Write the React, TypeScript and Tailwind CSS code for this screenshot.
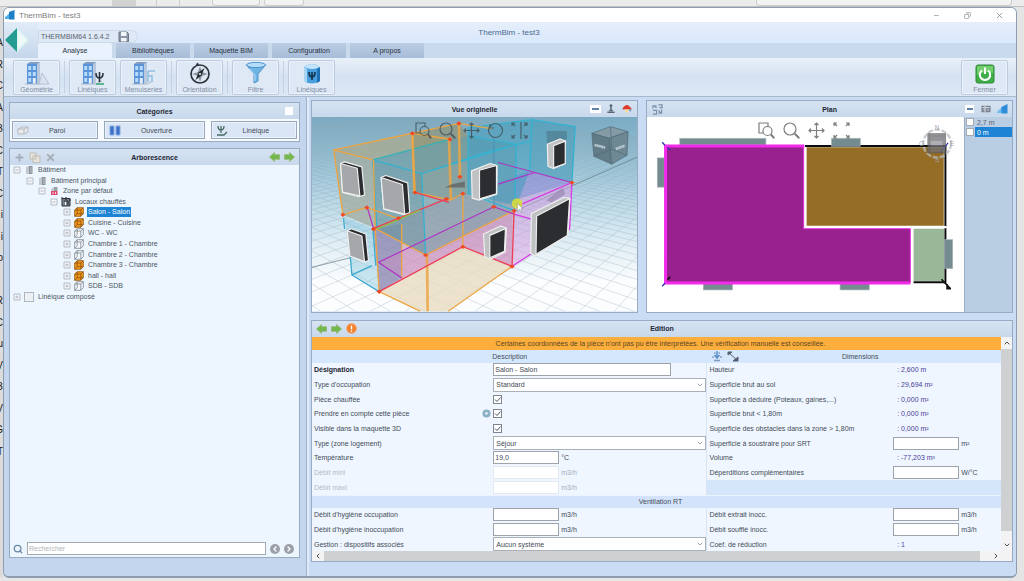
import React, { useState } from "react";
import { ChevronDown, ChevronLeft, ChevronRight, ChevronUp, Copy, Minus, Plus, Search, X } from "lucide-react";

type P = { children?: React.ReactNode; className?: string };

const EDGE_LETTERS = ["A", "R", "C", "A", "B", "C", "T", "C", "i", "i", "o", "", "R", "C", "u", "V", "B", "V", "G", "T"];

/* ---------- Ribbon icons ---------- */

function Building({ children }: P) {
  return (
    <svg viewBox="0 0 28 26" className="h-[26px] w-7" aria-hidden="true">
      <path d="M4 3 L7 1 L17 1 L17 21 L14 23 L4 23 Z" fill="#7f9cc4" />
      <path d="M4 3 H14 V23 H4 Z" fill="#5b92d8" />
      <path d="M14 3 L17 1 V21 L14 23 Z" fill="#b9c8dc" />
      <path d="M5.200 5 H8.200 V9 H5.200 Z M9.800 5 H12.800 V9 H9.800 Z M5.200 11 H8.200 V15 H5.200 Z M9.800 11 H12.800 V15 H9.800 Z M5.200 17 H8.200 V21 H5.200 Z" fill="#b5dbff" />
      <path d="M9.800 17 H12.800 V23 H9.800 Z" fill="#e3edf8" />
      <path d="M2 23 L17 23 L23 20" stroke="#a9b6c6" fill="none" />
      {children}
    </svg>
  );
}

const GeometryIcon = () => (
  <Building>
    <path d="M16 23 L19 12 L26 23 Z" fill="#d8e2ee" stroke="#b4c2d4" />
  </Building>
);
const LinearIcon = () => (
  <Building>
    <path d="M17 12 Q17 17 20.500 17 Q24 17 24 12 M20.500 11 V21" stroke="#26323d" strokeWidth="1.600" fill="none" />
    <path d="M17 23 H25" stroke="#2fa66d" strokeWidth="1.500" />
  </Building>
);
const JoineryIcon = () => (
  <Building>
    <path d="M18 10 H25 M18 10 V21 M18 15 H22 V21" stroke="#8fbde2" strokeWidth="1.500" fill="none" />
  </Building>
);
const CompassIcon = () => (
  <svg viewBox="0 0 28 26" className="h-[26px] w-7" aria-hidden="true">
    <circle cx="14" cy="13" r="9" fill="none" stroke="#2e343c" strokeWidth="1.700" />
    <path d="M14 5 L16 11 L22 13 L16 15 L14 21 L12 15 L6 13 L12 11 Z" fill="#8d959f" />
    <path d="M18.500 7 L15.500 14.500 L9.500 19 L12.500 11.500 Z" fill="#252b33" />
    <circle cx="14" cy="13" r="1" fill="#fff" />
    <path d="M12 1.500 L9.500 3.500 L13 4.500 Z" fill="#2e343c" />
  </svg>
);
const FunnelIcon = () => (
  <svg viewBox="0 0 28 26" className="h-[26px] w-7" aria-hidden="true">
    <path d="M4.500 4 L12 13 V22 L16 20 V13 L23.500 4 Z" fill="#6db3e4" stroke="#4d94cc" />
    <ellipse cx="14" cy="4" rx="9.500" ry="2.600" fill="#b5defa" stroke="#4d94cc" />
    <path d="M8 8 L13 14 V20" stroke="#b5defa" fill="none" />
  </svg>
);
const LinearBoxIcon = () => (
  <svg viewBox="0 0 28 26" className="h-[26px] w-7" aria-hidden="true">
    <path d="M6 6 Q14 0 22 6 V20 Q14 25 6 20 Z" fill="#4a9fdc" />
    <path d="M6 6 L9 8 V22 L6 20 Z" fill="#a9d5f5" />
    <path d="M22 6 L19 8 V22 L22 20 Z" fill="#1f6fb5" />
    <path d="M6 6 Q14 0 22 6 Q14 10 6 6 Z" fill="#c3e4fb" />
    <path d="M11 11 Q11 16 14 16 Q17 16 17 11 M14 11 V19" stroke="#12344f" strokeWidth="1.700" fill="none" />
  </svg>
);
const PowerIcon = () => (
  <svg viewBox="0 0 28 26" className="h-[26px] w-7" aria-hidden="true">
    <rect x="5" y="4" width="18" height="18" rx="2" fill="#3fae49" stroke="#2c8a37" />
    <path d="M6 5 H22 V12 Q14 9 6 14 Z" fill="#75cf70" />
    <path d="M11 9.500 A5.200 5.200 0 1 0 17 9.500" fill="none" stroke="#fff" strokeWidth="2" />
    <path d="M14 6.500 V13" stroke="#fff" strokeWidth="2" />
  </svg>
);

function Arrow({ left, size = "h-[11px] w-3" }: { left?: boolean; size?: string }) {
  return (
    <svg viewBox="0 0 12 11" className={size} aria-hidden="true">
      <path
        d={left ? "M0.500 5.500 L6 0.500 V3 H11.500 V8 H6 V10.500 Z" : "M11.500 5.500 L6 0.500 V3 H0.500 V8 H6 V10.500 Z"}
        fill="#72b94b"
        stroke="#96b878"
      />
    </svg>
  );
}

/* ---------- Frame pieces ---------- */

function RibbonButton({ label, children }: { label: string; children: React.ReactNode }) {
  return (
    <button className="flex h-[35px] w-[47px] flex-col items-center rounded-xs border border-[#bccbdd] bg-[#dfe9f5] text-[#8290a6] shadow-[inset_0_0_0_1px_#eaf2fb]">
      <span className="flex h-[25px] items-start">{children}</span>
      <span className="leading-[7px]">{label}</span>
    </button>
  );
}

const RibbonSep = () => <span className="mx-1 h-8 w-px bg-[#c3d1e2]" />;

function PanelHeader({ title, left, right }: { title: string; left?: React.ReactNode; right?: React.ReactNode }) {
  return (
    <header className="grid h-4 shrink-0 grid-cols-[1fr_auto_1fr] items-center bg-linear-to-b from-[#d6e3f2] to-[#c8d9ec] px-1">
      <div className="flex items-center gap-1">{left}</div>
      <h2 className="font-bold text-[#1e2733]">{title}</h2>
      <div className="flex items-center justify-end gap-1">{right}</div>
    </header>
  );
}

function Panel({ children, className = "" }: P) {
  return <section className={"flex flex-col border border-[#98abc3] " + className}>{children}</section>;
}

/* ---------- Tree ---------- */

type Kind = "building" | "zone" | "rooms" | "solid" | "wire" | "box";
const TREE: { pad: string; label: string; kind: Kind; open?: boolean }[] = [
  { pad: "pl-[3px]", label: "Bâtiment", kind: "building", open: true },
  { pad: "pl-4", label: "Bâtiment principal", kind: "building", open: true },
  { pad: "pl-7", label: "Zone par défaut", kind: "zone", open: true },
  { pad: "pl-10", label: "Locaux chauffés", kind: "rooms", open: true },
  { pad: "pl-[53px]", label: "Salon - Salon", kind: "solid" },
  { pad: "pl-[53px]", label: "Cuisine - Cuisine", kind: "solid" },
  { pad: "pl-[53px]", label: "WC - WC", kind: "wire" },
  { pad: "pl-[53px]", label: "Chambre 1 - Chambre", kind: "wire" },
  { pad: "pl-[53px]", label: "Chambre 2 - Chambre", kind: "wire" },
  { pad: "pl-[53px]", label: "Chambre 3 - Chambre", kind: "solid" },
  { pad: "pl-[53px]", label: "hall - hall", kind: "solid" },
  { pad: "pl-[53px]", label: "SDB - SDB", kind: "wire" },
  { pad: "pl-[3px]", label: "Linéique composé", kind: "box" },
];

function TreeIcon({ kind }: { kind: Kind }) {
  return (
    <svg viewBox="0 0 10 10" className="size-[10px] shrink-0" aria-hidden="true">
      {kind === "building" && (
        <>
          <path d="M2 2 L5 1 V9 H2 Z" fill="#c4c8cf" />
          <path d="M5 1 H8.500 V9 H5 Z" fill="#8d939d" />
          <path d="M6 3 H8 M6 5 H8 M6 7 H8" stroke="#dfe3e8" strokeWidth=".6" />
        </>
      )}
      {kind === "zone" && (
        <>
          <path d="M2 3 L5 1 V5 H2 Z" fill="#c4c8cf" />
          <path d="M5 1 H8.500 V5 H5 Z" fill="#9aa0aa" />
          <path d="M2 5 H8.500 V9 H2 Z" fill="#e0476d" />
          <path d="M4 6 V8 M6.500 6 V8" stroke="#fbd3dc" />
        </>
      )}
      {kind === "rooms" && (
        <>
          <path d="M1 1.500 H9 V9 H1 Z" fill="#7a828c" stroke="#2b3138" />
          <path d="M3 4 H7 V8 M0 1 H2 M8 3 H10 M5 0 V3" stroke="#2b3138" strokeWidth="1.200" fill="none" />
          <path d="M4.500 5 V8" stroke="#fff" />
        </>
      )}
      {kind === "solid" && (
        <path d="M.7 3 L3.200 .7 H9.300 V6.700 L6.800 9.300 H.7 Z M.7 3 H6.800 V9.300 M6.800 3 L9.300 .7 M3.200 .7 V6.700 M.7 9.300 L3.200 6.700 H9.300" fill="#f29a1f" stroke="#8f5008" strokeWidth=".8" />
      )}
      {kind === "wire" && (
        <path d="M.7 3 L3.200 .7 H9.300 V6.700 L6.800 9.300 H.7 Z M.7 3 H6.800 V9.300 M6.800 3 L9.300 .7 M3.200 .7 V6.700 M.7 9.300 L3.200 6.700" fill="#f6f9fc" stroke="#7c858f" strokeWidth=".8" />
      )}
      {kind === "box" && <rect x=".5" y=".5" width="9" height="9" fill="#eceff3" stroke="#b2b8c0" />}
    </svg>
  );
}

function Tree() {
  const [selected, setSelected] = useState(4);
  return (
    <ul className="grid h-[137px] auto-rows-fr">
      {TREE.map((n, i) => (
        <li key={i} className={"flex items-center gap-[3px] " + n.pad}>
          <button aria-label={n.open ? "Réduire" : "Développer"} className="shrink-0">
            <svg viewBox="0 0 8 8" className="size-2">
              <path d={n.open ? "M1 1 H7 V7 H1 Z M2.500 4 H5.500" : "M1 1 H7 V7 H1 Z M2.500 4 H5.500 M4 2.500 V5.500"} fill="#f3f6fa" stroke="#a7adb6" strokeWidth=".8" />
            </svg>
          </button>
          <TreeIcon kind={n.kind} />
          <button
            onClick={() => setSelected(i)}
            className={"px-px leading-[10px] " + (selected === i ? "bg-[#1d83d4] text-white" : "text-[#4c5561]")}
          >
            {n.label}
          </button>
        </li>
      ))}
    </ul>
  );
}

/* ---------- 3D view ---------- */

const range = (a: number, b: number, s: number) => Array.from({ length: Math.floor((b - a) / s) }, (_, i) => a + i * s);

const NODES: [number, number][] = [
  [322, 117], [462, 87], [435, 135], [113, 362], [185, 340], [205, 405], [280, 372], [425, 314], [330, 295], [465, 248], [474, 298], [362, 483], [628, 350], [622, 517], [222, 593], [474, 458], [802, 265], [567, 338],
];

function Scene() {
  return (
    <svg viewBox="20 68 978 585" preserveAspectRatio="none" className="absolute inset-0 h-full w-full" role="img" aria-label="Vue 3D du bâtiment">
      <defs>
        <linearGradient id="sky" x1="0" y1="0" x2="0" y2="1">
          <stop offset="0" stopColor="#76adc8" />
          <stop offset=".3" stopColor="#a3cbdd" />
          <stop offset=".62" stopColor="#dbebf3" />
          <stop offset=".85" stopColor="#fcfdfe" />
        </linearGradient>
      </defs>
      <rect x="20" y="68" width="978" height="585" fill="url(#sky)" />
      <g stroke="#8fa6b4" strokeWidth="1.800" opacity=".5">
        {range(-900, 7000, 105).map((x) => (
          <line key={"a" + x} x1="-960" y1="-50" x2={x} y2="652" />
        ))}
        {range(-6000, 1500, 105).map((x) => (
          <line key={"b" + x} x1="1565" y1="-50" x2={x} y2="652" />
        ))}
      </g>
      <path d="M620 355 L998 189 M20 520 L140 490" stroke="#5f747f" strokeWidth="2" />
      {/* lower floor */}
      <path d="M222 593 L474 458 L622 517 L430 652 H345 Z" fill="#e9dcc0" opacity=".8" />
      <path d="M205 403 L474 298 L628 350 L622 517 L474 458 L222 593 Z" fill="#c98fb4" opacity=".5" />
      <path d="M205 403 L290 390 V552 L222 593 Z" fill="#6f7fae" opacity=".55" />
      <path d="M220 505 L567 338 L622 360 L622 517 L474 458 L290 552 Z" fill="#cf8fc4" opacity=".45" />
      <path d="M118 370 L205 403 L222 593 L140 543 Z" fill="#7cc3dd" opacity=".4" />
      <path d="M567 338 L802 265 L795 405 L622 517 L628 350 Z" fill="#d79be0" opacity=".5" />
      <path d="M567 338 L802 265 L675 230 L580 262 Z" fill="#8d7fd6" opacity=".55" />
      {/* upper floor */}
      <path d="M85 167 L322 117 L435 135 L203 197 Z" fill="#aaa98f" opacity=".75" />
      <path d="M85 167 L203 197 L210 403 L113 362 Z" fill="#a3aca0" opacity=".75" />
      <path d="M322 117 L462 87 L490 125 V300 L440 318 L330 295 Z" fill="#8f9271" opacity=".65" />
      <path d="M203 197 L435 135 L490 125 L635 150 L350 238 Z" fill="#6f9da6" opacity=".75" />
      <path d="M203 197 L350 238 L362 483 L210 403 Z" fill="#69969f" opacity=".7" />
      <path d="M350 238 L635 150 L628 350 L362 483 Z" fill="#81a2aa" opacity=".68" />
      <path d="M490 100 L682 76 L675 230 L635 335 L490 300 Z" fill="#3f9dbd" opacity=".55" />
      <path d="M682 76 L812 97 L802 265 L675 230 Z" fill="#4b9cba" opacity=".65" />
      <g fill="none" strokeWidth="4" strokeLinejoin="round">
        <path d="M203 197 L350 238 L635 150 L490 125 M350 238 L362 483 M203 197 L215 400 M635 150 L630 350 L490 298 M490 100 V300 M490 100 L682 76 L812 97 L802 265 M682 76 L675 230 M350 238 L567 168 L680 140" stroke="#35b2d0" />
        <path d="M115 372 L118 405 M135 485 L140 543 L222 593 M140 543 L200 515 M203 400 L212 515" stroke="#3fa9cf" />
        <path d="M203 197 L435 135" stroke="#35b2b5" />
        <path d="M567 130 V338" stroke="#4a91b6" strokeWidth="3" />
      </g>
      <g fill="none" stroke="#eba544" strokeWidth="4">
        <path d="M203 197 L85 167 L322 117 L435 135 M322 117 L462 87 L560 103 M85 167 L113 362 L185 340 L275 372 M205 197 L210 403 L222 593 L345 652 M322 117 L330 295 L438 318 L474 298 M210 403 L362 483 L628 350 M622 517 L430 652 M290 390 V552 M474 300 V458" />
        <path d="M432 130 L438 318 M462 87 L465 248 M322 117 L328 295 M366 483 L368 652" strokeWidth="8" opacity=".85" />
      </g>
      <g fill="none" strokeWidth="3.500">
        <path d="M220 505 L567 338 L628 360 M220 505 L290 552 M580 205 L802 265 M580 270 L690 235 L802 265 M185 335 L205 403" stroke="#b02fc4" />
        <path d="M635 337 L802 265 L795 405 L622 517 M628 360 L680 375" stroke="#d53be4" strokeWidth="4" />
        <path d="M222 593 L474 458 L622 517 L628 350 M330 295 L432 325 M205 403 L425 314" stroke="#ee3d55" strokeWidth="4" />
        <path d="M215 405 L345 348" stroke="#8fbf45" strokeWidth="4" />
      </g>
      {/* openings */}
      <path d="M725 110 H787 V135 L728 150 Z" fill="#4d7686" opacity=".6" />
      <g stroke="#f0f0f0" strokeWidth="3.500" strokeLinejoin="round">
        <path d="M106 208 L118 203 L170 218 L178 303 L160 308 L112 295 Z" fill="#2b2d30" />
        <path d="M106 208 L156 222 L164 305 L112 294 Z" fill="#a5a7aa" />
        <path d="M228 250 L242 244 L308 266 L314 355 L296 362 L236 345 Z" fill="#2b2d30" />
        <path d="M228 250 L292 271 L299 360 L236 344 Z" fill="#a5a7aa" />
        <path d="M126 410 L138 404 L182 420 L190 500 L176 504 L134 486 Z" fill="#2b2d30" />
        <path d="M126 410 L170 426 L178 503 L134 486 Z" fill="#a5a7aa" />
        <path d="M500 230 L556 208 L577 214 L576 300 L522 318 L502 312 Z" fill="#bfc1c3" />
        <path d="M524 228 L575 214 V299 L524 314 Z" fill="#2b2d30" />
        <path d="M728 150 L766 134 L783 140 L781 209 L746 223 L730 216 Z" fill="#bfc1c3" />
        <path d="M747 154 L782 141 V208 L747 221 Z" fill="#2b2d30" />
        <path d="M536 420 L588 396 L605 402 L601 474 L556 496 L540 488 Z" fill="#bfc1c3" />
        <path d="M555 424 L602 404 L599 472 L555 491 Z" fill="#2b2d30" />
        <path d="M680 358 L778 310 L796 312 L790 424 L692 486 L678 478 Z" fill="#bfc1c3" />
        <path d="M696 366 L795 314 L788 424 L694 481 Z" fill="#2b2d30" />
      </g>
      <path d="M725 318 L775 280 L782 300 L740 325 Z" fill="#9a87b0" opacity=".7" />
      <path d="M440 270 L480 262 V280 H420 Z" fill="#55504e" opacity=".6" />
      {NODES.map(([x, y], i) => (
        <path key={i} d={`M${x - 8} ${y} L${x} ${y - 6} L${x + 8} ${y} L${x} ${y + 7} Z`} fill="#ef4a26" />
      ))}
      {/* orientation cube */}
      <g stroke="#48606d" strokeWidth="2" opacity=".9">
        <path d="M862 117 L918 97 L971 112 L914 132 Z" fill="#8499a3" />
        <path d="M862 117 L914 132 L922 210 L868 186 Z" fill="#5d7580" />
        <path d="M914 132 L971 112 L968 183 L922 210 Z" fill="#6b838e" />
        <path d="M918 97 L922 165 L868 186 M922 165 L968 183" fill="none" />
      </g>
      <path d="M870 152 L902 160 M934 164 L962 154" stroke="#b9c9d1" strokeWidth="8" strokeDasharray="6 1" />
      <circle cx="637" cy="328" r="16" fill="#d6dc3c" opacity=".9" />
      <path d="M638 328 V352 L644 346 L649 354 L652 352 L648 344 H655 Z" fill="#fff" stroke="#555" />
    </svg>
  );
}

/* ---------- Plan ---------- */

function PlanDrawing() {
  return (
    <svg viewBox="20 68 957 585" preserveAspectRatio="none" className="absolute inset-0 h-full w-full" role="img" aria-label="Plan du niveau 0 m">
      <g fill="#748b90" stroke="#a7b6ba" strokeWidth="2">
        <rect x="119" y="132" width="260" height="20" />
        <rect x="51" y="191" width="21" height="88" />
        <rect x="190" y="567" width="88" height="21" />
        <rect x="603" y="567" width="88" height="21" />
      </g>
      <path d="M497 155 H921 V565 H825" fill="none" stroke="#0b0b0b" strokeWidth="6" />
      <rect x="502" y="159" width="414" height="236" fill="#956d25" />
      <path d="M500 399 H925" stroke="#fff" strokeWidth="7" />
      <rect x="825" y="404" width="92" height="157" fill="#98b898" />
      <path d="M75 155 H493 V404 H815 V567 H75 Z" fill="#98218f" />
      <path d="M493 155 V404 H815 V567" fill="none" stroke="#e32bdd" strokeWidth="3" />
      <path d="M495 155 H76 V567 H815" fill="none" stroke="#f22bea" strokeWidth="9" />
      <g fill="#748b90" stroke="#a7b6ba" strokeWidth="2">
        <rect x="577" y="132" width="87" height="24" />
        <rect x="919" y="437" width="24" height="87" />
      </g>
      <path d="M66 144 L74 153 M82 160 L90 167 M66 577 L74 568 M905 175 L929 146" stroke="#2f35b5" strokeWidth="4" />
      <path d="M82 557 L90 549 M909 556 L936 584 M926 570 V584 H938" stroke="#111" strokeWidth="5" fill="none" />
      <g opacity=".75">
        <circle cx="896" cy="148" r="42" fill="none" stroke="#b9bcc2" strokeWidth="7" strokeDasharray="16 5" />
        <rect x="868" y="118" width="54" height="58" fill="#6f6f75" stroke="#4b4b50" strokeWidth="2" />
        <path d="M868 125 H922 M874 118 V176" stroke="#55555a" strokeWidth="2" />
        <rect x="876" y="140" width="36" height="14" fill="#94949a" />
      </g>
      <g fontSize="19" fill="#a1a5ad" fontFamily="Liberation Sans, sans-serif" textAnchor="middle">
        <text x="896" y="107">N</text>
        <text x="941" y="155">E</text>
        <text x="896" y="203">S</text>
        <text x="849" y="155">O</text>
      </g>
    </svg>
  );
}

function ToolGlyph({ d, circle }: { d: string; circle?: [number, number, number] }) {
  return (
    <svg viewBox="0 0 17 17" className="size-[17px]" fill="none" stroke="currentColor" strokeWidth="1.200">
      {circle && <circle cx={circle[0]} cy={circle[1]} r={circle[2]} />}
      <path d={d} />
    </svg>
  );
}
const G_ZOOMAREA = "M10 4 V1 H1 V11 H5 M13 12 L16.500 16 M12.500 12.500 L16 16.500";
const G_ZOOM = "M11.500 12 L16 16.500 M12 11.500 L16.500 16";
const G_PAN = "M8.500 1 V16 M1 8.500 H16 M6.500 3 L8.500 1 L10.500 3 M6.500 14 L8.500 16 L10.500 14 M3 6.500 L1 8.500 L3 10.500 M14 6.500 L16 8.500 L14 10.500";
const G_FIT = "M1 4 V1 H4 M1 1 L4 4 M13 1 H16 V4 M16 1 L13 4 M1 13 V16 H4 M1 16 L4 13 M13 16 H16 V13 M16 16 L13 13";

const ICON_BTN = "shrink-0 inline-flex items-center justify-center";

/* ---------- Edition form ---------- */

const BOX = "h-[13px] border border-[#9da3ab] bg-white px-px leading-[11px] text-[#444b55] outline-none";

function Row({ id, label, bold, dim, children }: { id?: string; label: string; bold?: boolean; dim?: boolean; children?: React.ReactNode }) {
  return (
    <div className="col-span-2 grid grid-cols-subgrid items-center">
      <label htmlFor={id} className={"truncate pl-0.5 " + (bold ? "font-bold text-[#1e2733]" : dim ? "text-[#b3bac4]" : "text-[#434c58]")}>
        {label}
      </label>
      <div className={"flex min-w-0 items-center gap-0.5 " + (dim ? "text-[#a5adb8]" : "text-[#434c58]")}>{children}</div>
    </div>
  );
}

function Select({ id, value }: { id: string; value: string }) {
  return (
    <span className="grid w-full items-center">
      <select id={id} defaultValue={value} className="h-[14px] w-full appearance-none border border-[#aab0b8] bg-white pl-0.5 text-[#444b55] outline-none [grid-area:1/1]">
        <option>{value}</option>
      </select>
      <ChevronDown className="pointer-events-none mr-0.5 size-2 justify-self-end text-[#6f7680] [grid-area:1/1]" />
    </span>
  );
}

function Check({ id, help }: { id: string; help?: boolean }) {
  return (
    <span className="relative grid items-center">
      {help && (
        <svg viewBox="0 0 10 10" className="absolute -left-[11px] size-[9px]" aria-hidden="true">
          <circle cx="5" cy="5" r="4.500" fill="#8cb0c4" />
          <path d="M3 4 L5 7 L7 4 Z" fill="#f1f7fa" />
        </svg>
      )}
      <input id={id} type="checkbox" defaultChecked className="peer size-[9px] appearance-none border border-[#7f8790] bg-white [grid-area:1/1]" />
      <svg viewBox="0 0 9 9" className="pointer-events-none invisible size-[9px] peer-checked:visible [grid-area:1/1]" aria-hidden="true">
        <path d="M2 4.500 L4 6.500 L7.500 2.500" fill="none" stroke="#4e565f" />
      </svg>
    </span>
  );
}

function NumberBox({ id, unit, value, dim }: { id: string; unit: string; value?: string; dim?: boolean }) {
  return (
    <>
      <input id={id} defaultValue={value} disabled={dim} className={BOX + " w-[66px] " + (dim ? "border-[#e3e9f0]" : "")} />
      <span>{unit}</span>
    </>
  );
}

const Val = ({ children }: P) => <output className="pl-1 text-[#4a3f98]">: {children}</output>;

const HALVES = "grid grid-cols-[396fr_294fr]";
const LEFT = "grid auto-rows-fr grid-cols-[182fr_214fr] border-r border-[#d9e4f1]";
const RIGHT = "grid auto-rows-fr grid-cols-[186fr_108fr]";

function EditionForm() {
  return (
    <div className="flex min-h-0 flex-1">
      <form className="flex min-w-0 flex-1 flex-col overflow-hidden bg-[#eff6ff]" onSubmit={(e) => e.preventDefault()}>
        <p className="h-[13px] shrink-0 bg-[#fbae3b] pl-2 text-center leading-[13px] text-[#5b4524]">
          Certaines coordonnées de la pièce n'ont pas pu être interprétées. Une vérification manuelle est conseillée.
        </p>
        <div className={HALVES + " h-[13px] shrink-0 items-center bg-[#d5e7fc] text-[#434c58]"}>
          <h3 className="text-center">Description</h3>
          <div className="flex items-center">
            <div className="flex gap-1 pl-1">
              <svg viewBox="0 0 12 11" className="h-[11px] w-3" aria-hidden="true">
                <path d="M6 0 V6 M3.500 4 L6 7 L8.500 4" stroke="#5c8fc7" strokeWidth="1.500" fill="none" />
                <path d="M3 2 H4.500 M7.500 2 H9 M2 5 V7 M10 5 V7 M3 9.500 H9" stroke="#7d9cc0" strokeWidth="1.300" fill="none" />
              </svg>
              <svg viewBox="0 0 12 11" className="h-[11px] w-3" aria-hidden="true">
                <path d="M1 1 H5 L1 4 Z M11 10 H6 L11 6 Z M2 2 L10 9" fill="#556" stroke="#566270" />
              </svg>
            </div>
            <h3 className="flex-1 pr-5 text-center">Dimensions</h3>
          </div>
        </div>
        <div className={HALVES + " h-[132px] shrink-0"}>
          <div className={LEFT}>
            <Row id="designation" label="Désignation" bold>
              <input id="designation" defaultValue="Salon - Salon" className={BOX + " w-5/6"} />
            </Row>
            <Row id="occupation" label="Type d'occupation"><Select id="occupation" value="Standard" /></Row>
            <Row id="chauffee" label="Pièce chauffée"><Check id="chauffee" /></Row>
            <Row id="compte" label="Prendre en compte cette pièce"><Check id="compte" help /></Row>
            <Row id="visible" label="Visible dans la maquette 3D"><Check id="visible" /></Row>
            <Row id="zone" label="Type (zone logement)"><Select id="zone" value="Séjour" /></Row>
            <Row id="temp" label="Température"><NumberBox id="temp" unit="°C" value="19,0" /></Row>
            <Row id="dmini" label="Débit mini" dim><NumberBox id="dmini" unit="m3/h" dim /></Row>
            <Row id="dmaxi" label="Débit maxi" dim><NumberBox id="dmaxi" unit="m3/h" dim /></Row>
          </div>
          <div className={RIGHT}>
            <Row label="Hauteur"><Val>2,600 m</Val></Row>
            <Row label="Superficie brut au sol"><Val>29,694 m²</Val></Row>
            <Row label="Superficie à déduire (Poteaux, gaines,...)"><Val>0,000 m²</Val></Row>
            <Row label="Superficie brut < 1,80m"><Val>0,000 m²</Val></Row>
            <Row label="Superficie des obstacles dans la zone > 1,80m"><Val>0,000 m²</Val></Row>
            <Row id="srt" label="Superficie à soustraire pour SRT"><NumberBox id="srt" unit="m²" /></Row>
            <Row label="Volume"><Val>-77,203 m³</Val></Row>
            <Row id="deperd" label="Déperditions complémentaires"><NumberBox id="deperd" unit="W/°C" /></Row>
            <div className="col-span-2 bg-[#d5e6fb]" />
          </div>
        </div>
        <h3 className="h-[13px] shrink-0 border-t border-[#eaf3fe] bg-[#d3e3fb] pl-2 text-center leading-[12px] text-[#434c58]">Ventilation RT</h3>
        <div className={HALVES + " h-11 shrink-0"}>
          <div className={LEFT}>
            <Row id="hocc" label="Débit d'hygiène occupation"><NumberBox id="hocc" unit="m3/h" /></Row>
            <Row id="hinocc" label="Débit d'hygiène inoccupation"><NumberBox id="hinocc" unit="m3/h" /></Row>
            <Row id="gestion" label="Gestion : dispositifs associés"><Select id="gestion" value="Aucun système" /></Row>
          </div>
          <div className={RIGHT}>
            <Row id="extrait" label="Débit extrait inocc."><NumberBox id="extrait" unit="m3/h" /></Row>
            <Row id="souffle" label="Débit soufflé inocc."><NumberBox id="souffle" unit="m3/h" /></Row>
            <Row label="Coef. de réduction"><Val>1</Val></Row>
          </div>
        </div>
      </form>
      <div className="flex w-[11px] shrink-0 flex-col bg-[#f3f3f3] text-[#4d4d4d]">
        <button aria-label="Haut" className="flex h-3 items-center justify-center"><ChevronUp className="size-2" strokeWidth={3} /></button>
        <div className="flex-1 bg-[#cfd0d1]" />
        <button aria-label="Bas" className="mt-2 flex h-3 items-center justify-center"><ChevronDown className="size-2" strokeWidth={3} /></button>
      </div>
    </div>
  );
}

/* ---------- Application ---------- */

const TABS = ["Analyse", "Bibliothèques", "Maquette BIM", "Configuration", "A propos"];

export default function App() {
  const [tab, setTab] = useState(0);
  const [level, setLevel] = useState(1);
  return (
    <div className="flex h-screen min-h-[560px] w-full flex-col overflow-hidden bg-[#e6e6e6] font-['Liberation_Sans',Arial,sans-serif] text-[7px] leading-[9px]">
      <div className="flex h-[7px] shrink-0 border-b border-[#c2c2c2] bg-[#ececec]">
        <span className="ml-28 w-6 bg-[#d2d2d2]" />
        <span className="ml-5 w-6 border-x border-[#cfcfcf]" />
        <span className="ml-8 w-12 rounded-b border border-t-0 border-[#cdcdcd] bg-[#f2f2f2]" />
        <span className="ml-1 w-10 rounded-b border border-t-0 border-[#cdcdcd] bg-[#f2f2f2]" />
        <span className="flex-1" />
        <span className="mr-3 w-1/4 rounded-b border border-t-0 border-[#cdcdcd] bg-[#f2f2f2]" />
      </div>
      <div className="flex min-h-0 flex-1 pb-[3px]">
        <aside className="w-[3px] shrink-0 overflow-hidden bg-[#dcdcdc] pt-[26px]" aria-hidden="true">
          <div className="grid h-[79%] auto-rows-fr justify-end text-right text-[10px] text-[#222]">
            {EDGE_LETTERS.map((l, i) => (
              <span key={i} className="leading-5">{l}</span>
            ))}
          </div>
        </aside>
        <main className="flex min-w-0 flex-1 flex-col overflow-hidden rounded-md border border-b-2 border-[#8d9cae] bg-[#c9dcf3]">
          <div className="flex h-[14px] shrink-0 items-center bg-white pl-px text-[8px] text-[#7d7d7d]">
            <svg viewBox="0 0 10 10" className="mr-1 size-[10px]" aria-hidden="true">
              <path d="M0 7 L5 3 V9 H0 Z" fill="#4fb2e8" />
              <path d="M4 2 L9.500 0 V9.500 H4 Z" fill="#1f7fc4" />
            </svg>
            <h1 className="flex-1">ThermBim - test3</h1>
            <button aria-label="Réduire" className="px-3"><Minus className="size-[7px]" /></button>
            <button aria-label="Restaurer" className="px-3"><Copy className="size-[7px] -scale-x-100" /></button>
            <button aria-label="Fermer la fenêtre" className="px-3"><X className="size-[9px]" /></button>
          </div>
          <div className="flex h-9 shrink-0 bg-linear-to-b from-[#e6eefa] via-[#dbe9fc] to-[#dbe9fc]">
            <button aria-label="Menu" className="flex w-[34px] shrink-0 items-center justify-start bg-linear-to-b from-[#e2ecf9] to-[#c5d6ea] pl-px">
              <svg viewBox="0 0 24 24" className="size-6">
                <path d="M0 12 L12 0 V24 Z" fill="#249c91" />
                <path d="M12 0 L24 12 L12 24 Z" fill="#d9f3ee" />
                <path d="M13 3 L22 12 L13 21 Z" fill="#eefaf7" />
              </svg>
            </button>
            <div className="flex min-w-0 flex-1 flex-col">
              <div className="grid h-[21px] grid-cols-[1fr_auto_1fr] items-center">
                <div className="mt-[7px] flex h-[13px] w-[100px] items-center justify-between rounded-r-full border border-[#cbdaec] bg-[#dfe9f6] pr-2 pl-0.5 text-[#56606e]">
                  <span>THERMBIM64 1.6.4.2</span>
                  <button aria-label="Enregistrer">
                    <svg viewBox="0 0 11 11" className="size-[11px]">
                      <path d="M1 1 H9 L10.500 2.500 V10.500 H1 Z" fill="#8a95a5" stroke="#6d7887" />
                      <path d="M3 1 H8.500 V5 H3 Z M3 7 H8.500 V10.500 H3 Z" fill="#f0f4f9" />
                    </svg>
                  </button>
                </div>
                <span className="pr-9 text-[8px] text-[#47698f]">ThermBim - test3</span>
              </div>
              <nav className="flex flex-1 gap-1 bg-[#c9daec]" role="tablist">
                {TABS.map((t, i) => (
                  <button
                    key={t}
                    role="tab"
                    aria-selected={tab === i}
                    onClick={() => setTab(i)}
                    className={"w-[74px] text-[#28313e] " + (tab === i ? "rounded-t-xs bg-[#e9f2fd]" : "bg-linear-to-b from-[#bccde3] to-[#a6bcd8]")}
                  >
                    {t}
                  </button>
                ))}
              </nav>
            </div>
          </div>
          <div className="flex h-[39px] shrink-0 items-center border-b border-[#a9b9cc] bg-linear-to-b from-[#e9f0f9] via-[#d4e2f1] to-[#dde8f6] pr-2 pl-[9px]">
            <RibbonButton label="Géométrie"><GeometryIcon /></RibbonButton>
            <RibbonSep />
            <RibbonButton label="Linéiques"><LinearIcon /></RibbonButton>
            <span className="w-1" />
            <RibbonButton label="Menuiseries"><JoineryIcon /></RibbonButton>
            <RibbonSep />
            <RibbonButton label="Orientation"><CompassIcon /></RibbonButton>
            <RibbonSep />
            <RibbonButton label="Filtre"><FunnelIcon /></RibbonButton>
            <RibbonSep />
            <RibbonButton label="Linéiques"><LinearBoxIcon /></RibbonButton>
            <span className="flex-1" />
            <RibbonButton label="Fermer"><PowerIcon /></RibbonButton>
          </div>

          <div className="flex min-h-0 flex-1">
            {/* left column */}
            <div className="flex w-[303px] shrink-0 flex-col gap-[6px] border-r border-[#9fb3cc] bg-[#c3d6ee] pt-[5px] pr-[6px] pb-[18px] pl-[5px]">
              <Panel className="bg-[#f7faff]">
                <PanelHeader title="Catégories" right={<button aria-label="Options" className="mr-0.5 size-2 bg-white" />} />
                <div className="flex gap-[6px] px-0.5 py-0.5 text-[#434c58]">
                  {[
                    { t: "Paroi", w: "flex-[86]", i: <path d="M1 4 L5 2 H11 V7 L7 9 H1 Z M1 4 H7 V9 M7 4 L11 2" fill="#e8eaec" stroke="#b5babf" /> },
                    { t: "Ouverture", w: "flex-[102]", i: <path d="M1 1 H5 V10 H1 Z M7 1 H11 V10 H7 Z" fill="#3c70c8" stroke="#86a9e4" /> },
                    { t: "Linéique", w: "flex-[86]", i: <path d="M2 1 Q2 5 5 5 Q8 5 8 1 M5 1 V8 M1 10 H8 L11 7" fill="none" stroke="#476a62" strokeWidth="1.300" /> },
                  ].map((c) => (
                    <button key={c.t} className={"flex h-[18px] items-center border border-[#98a8ba] bg-[#dae6f5] px-1 shadow-[inset_0_0_0_1px_#eaf2fc] " + c.w}>
                      <svg viewBox="0 0 12 11" className="h-[11px] w-3" aria-hidden="true">{c.i}</svg>
                      <span className="flex-1 pr-2 text-center">{c.t}</span>
                    </button>
                  ))}
                </div>
              </Panel>
              <Panel className="min-h-0 flex-1 bg-[#edf6ff]">
                <PanelHeader
                  title="Arborescence"
                  left={
                    <>
                      <button aria-label="Ajouter" className={ICON_BTN}><Plus className="size-[11px] text-[#a3adba]" strokeWidth={4} /></button>
                      <button aria-label="Copier" className={ICON_BTN}>
                        <svg viewBox="0 0 12 11" className="h-[11px] w-3"><path d="M1 1 H7 V7 H1 Z M4 4 H11 V10.500 H4 Z" fill="#e4e3df" stroke="#c3bdb2" /></svg>
                      </button>
                      <button aria-label="Supprimer" className={ICON_BTN}><X className="size-[11px] text-[#a7afba]" strokeWidth={4} /></button>
                    </>
                  }
                  right={
                    <>
                      <button aria-label="Précédent" className={ICON_BTN}><Arrow left size="h-[10px] w-[11px]" /></button>
                      <button aria-label="Suivant" className={ICON_BTN}><Arrow size="h-[10px] w-[11px]" /></button>
                    </>
                  }
                />
                <div className="flex-1"><Tree /></div>
                <div className="flex items-center gap-1 px-[3px] pb-0.5">
                  <Search className="size-[10px] text-[#6a87a5]" strokeWidth={3} />
                  <input aria-label="Rechercher" placeholder="Rechercher" className="h-[13px] min-w-0 flex-1 border border-[#a3a9b1] bg-white px-px outline-none placeholder:text-[#b0b4ba]" />
                  <button aria-label="Résultat précédent" className="flex size-[10px] items-center justify-center rounded-full bg-[#9ba0a8] text-white"><ChevronLeft className="size-2" strokeWidth={4} /></button>
                  <button aria-label="Résultat suivant" className="mr-0.5 flex size-[10px] items-center justify-center rounded-full bg-[#9ba0a8] text-white"><ChevronRight className="size-2" strokeWidth={4} /></button>
                </div>
              </Panel>
            </div>

            {/* right column */}
            <div className="flex min-w-0 flex-1 flex-col gap-[7px] border-l-2 border-[#dfebfa] bg-[#c9dcf3] pt-[3px] pr-[3px] pb-[14px] pl-0.5">
              <div className="grid min-h-0 flex-[213] grid-cols-[328fr_368fr] gap-2">
                <Panel className="min-w-0">
                  <PanelHeader
                    title="Vue originelle"
                    right={
                      <>
                        <button aria-label="Affichage" className="flex h-2 w-[11px] items-center justify-center bg-white"><span className="h-0.5 w-[7px] bg-[#5f80a8]" /></button>
                        <button aria-label="Caméra" className={ICON_BTN}>
                          <svg viewBox="0 0 12 11" className="h-[10px] w-3"><path d="M6 1 V8 M2 9 H10 M4 7 H8" stroke="#5a6672" strokeWidth="1.600" /><circle cx="6" cy="1.700" r="1.500" fill="#5a6672" /></svg>
                        </button>
                        <button aria-label="Rendu" className={ICON_BTN}>
                          <svg viewBox="0 0 12 11" className="h-[10px] w-3"><path d="M1 6 Q2 1 7 1 L11 5 V6 Z" fill="#dd3a2c" /><path d="M3 6 H8 V9 L5 10 Z" fill="#f4d9a1" /><path d="M8 6 H11 L9.500 9 Z" fill="#6a9bd0" /></svg>
                        </button>
                      </>
                    }
                  />
                  <div className="relative min-h-0 flex-1 overflow-hidden">
                    <Scene />
                    <div className="absolute inset-x-0 top-[5px] flex justify-center gap-[7px] pr-[6px] text-[#3f5058]/80">
                      <button aria-label="Zoom fenêtre"><ToolGlyph d={G_ZOOMAREA} circle={[9.5, 9, 4.5]} /></button>
                      <button aria-label="Zoom"><ToolGlyph d={G_ZOOM} circle={[7, 7, 6]} /></button>
                      <button aria-label="Déplacer"><ToolGlyph d={G_PAN} /></button>
                      <button aria-label="Pivoter"><ToolGlyph d="M3 2 V6 H7" circle={[8.5, 8.5, 7]} /></button>
                      <button aria-label="Ajuster"><ToolGlyph d={G_FIT + " M10 0 V17"} /></button>
                    </div>
                  </div>
                </Panel>
                <Panel className="min-w-0">
                  <PanelHeader
                    title="Plan"
                    left={
                      <button aria-label="Actualiser" className="ml-px inline-flex">
                        <svg viewBox="0 0 12 12" className="size-[11px]" fill="none" stroke="#7a90a8" strokeWidth="1.300"><path d="M1 5 V2 H5 M2 2 L5 4 M7 1 H11 V4 H8 M1 7 H5 V11 H1 M10.500 6 V10 H7 M10 10 L7 7" /></svg>
                      </button>
                    }
                    right={
                      <>
                        <button aria-label="Affichage" className="flex h-2 w-[9px] items-center justify-center bg-white"><span className="h-0.5 w-[6px] bg-[#5f80a8]" /></button>
                        <button aria-label="Calques" className="ml-0.5 inline-flex">
                          <svg viewBox="0 0 12 11" className="h-[10px] w-3"><path d="M1 2 H11 V9 H1 Z" fill="#7b8490" /><path d="M2 4 H10 M3 6.500 H5 M7 6.500 H9 M5 2 V9" stroke="#dfe5ec" /></svg>
                        </button>
                        <button aria-label="Logo" className="ml-px inline-flex">
                          <svg viewBox="0 0 11 10" className="h-[10px] w-[11px]"><path d="M0 8 L5 3 V9 H0 Z" fill="#6fbdf0" /><path d="M4.500 3 L10.500 0 V9.500 H4.500 Z" fill="#2d8cd8" /></svg>
                        </button>
                      </>
                    }
                  />
                  <div className="flex min-h-0 flex-1">
                    <div className="relative min-w-0 flex-1 overflow-hidden bg-white">
                      <PlanDrawing />
                      <div className="absolute inset-x-0 top-[5px] flex justify-center gap-2 pr-1 text-[#7d7d80]">
                        <button aria-label="Zoom fenêtre"><ToolGlyph d={G_ZOOMAREA} circle={[9.5, 9, 4.5]} /></button>
                        <button aria-label="Zoom"><ToolGlyph d={G_ZOOM} circle={[7, 7, 6]} /></button>
                        <button aria-label="Déplacer"><ToolGlyph d={G_PAN} /></button>
                        <button aria-label="Ajuster"><ToolGlyph d={G_FIT} /></button>
                      </div>
                    </div>
                    <ul className="w-[48px] shrink-0 border-l border-[#98abc3] bg-[#b9cde3]">
                      {["2,7 m", "0 m"].map((l, i) => (
                        <li key={l} className="flex h-[10px] items-center">
                          <input type="checkbox" aria-label={l} className="mx-px size-2 shrink-0 appearance-none border border-[#a3a9b1] bg-white" />
                          <button onClick={() => setLevel(i)} className={"h-[10px] flex-1 pl-0.5 text-left " + (level === i ? "bg-[#1d83d4] text-white" : "text-[#59636f]")}>{l}</button>
                        </li>
                      ))}
                    </ul>
                  </div>
                </Panel>
              </div>
              <Panel className="min-h-0 flex-[241] bg-[#eff6ff]">
                <PanelHeader
                  title="Edition"
                  left={
                    <>
                      <button aria-label="Précédent" className={ICON_BTN}><Arrow left size="h-[10px] w-[11px]" /></button>
                      <button aria-label="Suivant" className={ICON_BTN}><Arrow size="h-[10px] w-[11px]" /></button>
                      <button aria-label="Avertissement" className={ICON_BTN}>
                        <svg viewBox="0 0 11 11" className="size-[11px]"><circle cx="5.500" cy="5.500" r="5" fill="#f0832f" stroke="#f4b183" /><path d="M5.500 2.500 V6.500 M5.500 7.500 V9" stroke="#fff" strokeWidth="1.300" /></svg>
                      </button>
                    </>
                  }
                />
                <EditionForm />
                <div className="flex h-[10px] shrink-0 items-stretch bg-[#f3f3f3] text-[#4d4d4d]">
                  <button aria-label="Gauche" className="flex w-3 items-center justify-center"><ChevronLeft className="size-2" strokeWidth={3} /></button>
                  <div className="flex-1 bg-[#cfd0d1]" />
                  <button aria-label="Droite" className="flex w-8 items-center justify-center"><ChevronRight className="size-2" strokeWidth={3} /></button>
                </div>
              </Panel>
            </div>
          </div>
        </main>
        <div className="w-[7px] shrink-0 bg-[#e4e4e4]" />
      </div>
    </div>
  );
}
